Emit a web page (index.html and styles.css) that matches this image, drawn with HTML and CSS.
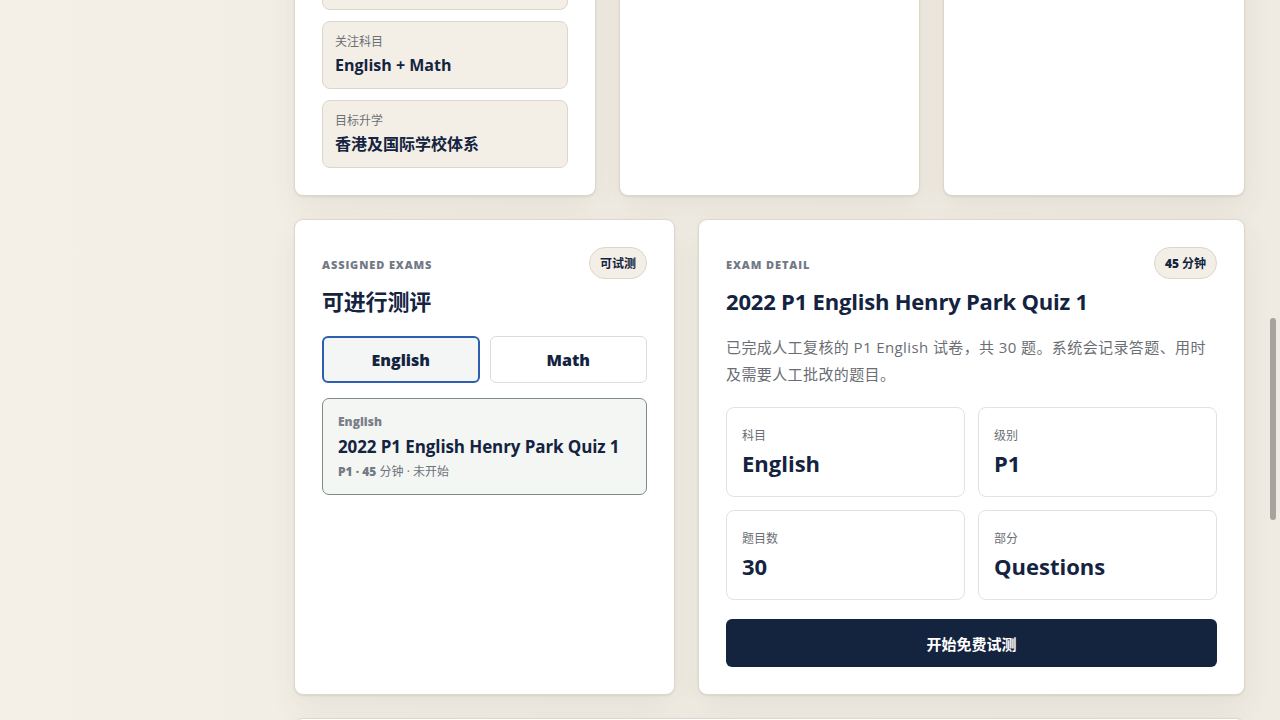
FILE: index.html
```html
<!DOCTYPE html>
<html lang="zh-CN">
<head>
<meta charset="utf-8">
<title>测评</title>
<link rel="stylesheet" href="styles.css">
</head>
<body>
<div class="page">
  <main class="main">
    <section class="row-top">
      <article class="card">
        <div class="eyebrow">PROFILE</div>
        <h2 class="card-title">学生资料</h2>
        <div class="info-list">
          <div class="info-box"><div class="info-label">年级</div><div class="info-value">P1</div></div>
          <div class="info-box"><div class="info-label">关注科目</div><div class="info-value">English + Math</div></div>
          <div class="info-box"><div class="info-label">目标升学</div><div class="info-value">香港及国际学校体系</div></div>
        </div>
      </article>
      <article class="card">
        <div class="eyebrow">PROGRESS</div>
        <h2 class="card-title">学习进度</h2>
      </article>
      <article class="card">
        <div class="eyebrow">REPORTS</div>
        <h2 class="card-title">测评报告</h2>
      </article>
    </section>

    <section class="row-main">
      <article class="card">
        <div class="card-head">
          <div class="eyebrow">ASSIGNED EXAMS</div>
          <span class="pill">可试测</span>
        </div>
        <h2 class="card-title">可进行测评</h2>
        <div class="tabs">
          <button class="tab tab-active">English</button>
          <button class="tab">Math</button>
        </div>
        <div class="exam-item">
          <div class="exam-subject">English</div>
          <div class="exam-name">2022 P1 English Henry Park Quiz 1</div>
          <div class="exam-meta"><b>P1 · 45</b> 分钟 · 未开始</div>
        </div>
      </article>

      <article class="card">
        <div class="card-head">
          <div class="eyebrow">EXAM DETAIL</div>
          <span class="pill"><b>45</b> 分钟</span>
        </div>
        <h2 class="card-title detail-title">2022 P1 English Henry Park Quiz 1</h2>
        <p class="desc">已完成人工复核的 P1 English 试卷，共 30 题。系统会记录答题、用时及需要人工批改的题目。</p>
        <div class="stats">
          <div class="stat"><div class="stat-label">科目</div><div class="stat-value">English</div></div>
          <div class="stat"><div class="stat-label">级别</div><div class="stat-value">P1</div></div>
          <div class="stat"><div class="stat-label">题目数</div><div class="stat-value">30</div></div>
          <div class="stat"><div class="stat-label">部分</div><div class="stat-value">Questions</div></div>
        </div>
        <button class="start-btn">开始免费试测</button>
      </article>
    </section>

    <section class="row-next">
      <article class="card card-tall"></article>
    </section>
  </main>
  <div class="scrollbar" aria-hidden="true"></div>
</div>
</body>
</html>
```

FILE: styles.css
```css
* { box-sizing: border-box; }

html, body {
  margin: 0;
  height: 720px;
  overflow: hidden;
}

body {
  background: #f3efe6;
  font-family: "Open Sans", "Noto Sans CJK SC", sans-serif;
  color: #14233f;
}

.page {
  position: relative;
  height: 720px;
  overflow: hidden;
  background: linear-gradient(90deg, #f4f0e7 0%, #f1ede4 40%, #efebe2 100%);
}

.main {
  margin-top: -158px;
  padding: 0 35px 0 294px;
  display: flex;
  flex-direction: column;
  gap: 23px;
}

.card {
  background: #ffffff;
  border: 1px solid #ddd7cd;
  border-radius: 9px;
  padding: 27px;
  box-shadow: 0 1px 2px rgba(70, 55, 30, 0.10), 0 12px 30px rgba(90, 75, 45, 0.07);
}

.row-top {
  display: grid;
  grid-template-columns: repeat(3, 1fr);
  gap: 23px;
}

.row-main {
  display: grid;
  grid-template-columns: 381px 1fr;
  gap: 23px;
}

.card-tall { height: 200px; }

.eyebrow {
  font-size: 11px;
  line-height: 16px;
  font-weight: 800;
  letter-spacing: 0.9px;
  color: #737985;
}

.card-title {
  margin: 8px 0 18px;
  font-size: 22px;
  line-height: 30px;
  font-weight: 700;
  letter-spacing: -0.2px;
  color: #14233f;
}

.card-head {
  display: flex;
  justify-content: space-between;
  align-items: center;
  height: 32px;
}

.card-head .eyebrow { margin-top: 4px; }

.pill {
  display: inline-flex;
  align-items: center;
  height: 32px;
  padding: 0 10px;
  border-radius: 16px;
  background: #f3efe6;
  border: 1px solid #ddd6ca;
  font-size: 12px;
  font-weight: 700;
  color: #14233f;
}

.pill b { font-weight: 800; margin-right: 3px; }

/* profile info boxes */
.info-list {
  display: flex;
  flex-direction: column;
  gap: 11px;
}

.info-box {
  height: 68px;
  padding: 12px 12px;
  background: #f3efe6;
  border: 1px solid #ddd6ca;
  border-radius: 8px;
}

.info-label {
  font-size: 12px;
  line-height: 16px;
  color: #6c6f76;
}

.info-value {
  margin-top: 4px;
  font-size: 16px;
  line-height: 22px;
  font-weight: 700;
  color: #14233f;
}

/* tabs */
.card-head + .card-title { margin: 7px 0 20px; }

.tabs {
  display: grid;
  grid-template-columns: 1fr 1fr;
  gap: 10px;
}

.tab {
  height: 47px;
  border: 1px solid #dcdcdc;
  border-radius: 6px;
  background: #ffffff;
  font-family: "Open Sans", "Noto Sans CJK SC", sans-serif;
  font-size: 16px;
  font-weight: 800;
  color: #14233f;
}

.tab-active {
  border: 2px solid #2e5fae;
  background: #f3f6f4;
}

.exam-item {
  margin-top: 15px;
  height: 97px;
  padding: 15px 15px;
  background: #f3f6f3;
  border: 1px solid #7d8c89;
  border-radius: 7px;
}

.exam-subject {
  font-size: 12px;
  line-height: 16px;
  font-weight: 800;
  color: #7a7f88;
}

.exam-name {
  margin-top: 5px;
  font-size: 17px;
  line-height: 24px;
  font-weight: 700;
  letter-spacing: -0.1px;
  color: #14233f;
}

.exam-meta {
  margin-top: 5px;
  font-size: 12px;
  line-height: 16px;
  color: #6f737b;
}

.exam-meta b { font-weight: 800; color: #737985; }

/* detail */
.card-head + .detail-title { margin-bottom: 0; }

.desc {
  margin: 18px 0 19px;
  font-size: 15px;
  line-height: 27px;
  letter-spacing: 0.4px;
  color: #6b6e74;
}

.stats {
  display: grid;
  grid-template-columns: 1fr 1fr;
  gap: 13px;
}

.stat {
  height: 90px;
  padding: 20px 15px;
  border: 1px solid #e2e2e2;
  border-radius: 8px;
  background: #ffffff;
}

.stat-label {
  font-size: 12px;
  line-height: 16px;
  color: #6b6e76;
}

.stat-value {
  margin-top: 5px;
  font-size: 22px;
  line-height: 28px;
  font-weight: 700;
  color: #14233f;
}

.start-btn {
  display: block;
  width: 100%;
  height: 48px;
  margin-top: 19px;
  border: 0;
  border-radius: 6px;
  background: #14243f;
  color: #ffffff;
  font-family: "Open Sans", "Noto Sans CJK SC", sans-serif;
  font-size: 15px;
  font-weight: 700;
}

.scrollbar {
  position: absolute;
  right: 4px;
  top: 318px;
  width: 6px;
  height: 202px;
  border-radius: 3px;
  background: #a7a39c;
}
```
